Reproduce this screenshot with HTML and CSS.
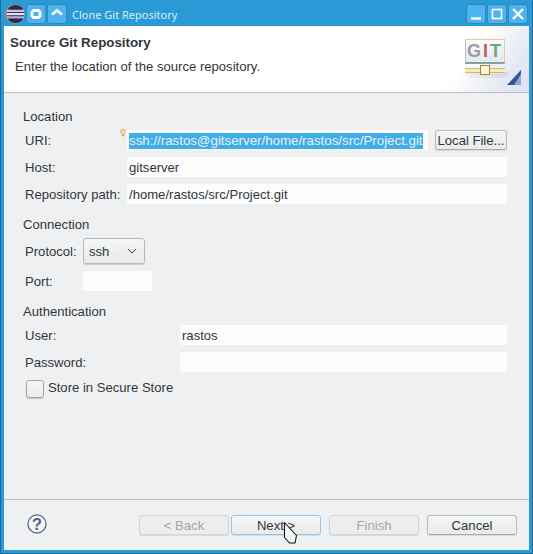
FILE: index.html
```html
<!DOCTYPE html>
<html lang="en">
<head>
  <meta charset="UTF-8" />
  <title>Clone Git Repository</title>
  <link rel="stylesheet" href="styles.css">
</head>
<body>
  <div class="window">

    <div class="titlebar">
      <svg class="app-icon" viewBox="0 0 21 21">
        <circle cx="10.5" cy="10.5" r="10" fill="#e8952c"/>
        <circle cx="11" cy="10.5" r="9.5" fill="#2c2357"/>
        <rect x="2" y="6" width="18" height="2.4" fill="#c9c6da"/>
        <rect x="1.5" y="9.4" width="19" height="2.4" fill="#e4e2ee"/>
        <rect x="2" y="12.8" width="18" height="2.4" fill="#b3afcc"/>
      </svg>
      <div class="tb-btn">
        <svg viewBox="1 1 18 18"><path d="M7.5 6.500h5l1.500 1.500v4l-1.500 1.500h-5L6 12V8z" fill="none" stroke="#fff" stroke-width="2.800"/></svg>
      </div>
      <div class="tb-btn">
        <svg viewBox="1 1 18 18"><path d="M5 10.500 10 6.500l5 4" fill="none" stroke="#fff" stroke-width="2.800"/></svg>
      </div>
      <span class="tb-title">Clone Git Repository</span>
      <div class="tb-btn">
        <svg viewBox="1 1 18 18"><path d="M5 14.500h10" stroke="#fff" stroke-width="2.400"/></svg>
      </div>
      <div class="tb-btn">
        <svg viewBox="1 1 18 18"><rect x="5.500" y="5.500" width="9" height="9" fill="none" stroke="#fff" stroke-width="1.600"/></svg>
      </div>
      <div class="tb-btn">
        <svg viewBox="1 1 18 18"><path d="M5 5l10 10M15 5 5 15" stroke="#fff" stroke-width="2.400"/></svg>
      </div>
    </div>

    <div class="dialog">
      <div class="banner">
        <div class="banner-text">
          <h1 class="banner-title">Source Git Repository</h1>
          <p class="banner-desc">Enter the location of the source repository.</p>
        </div>
        <div class="git-logo">
          <div class="git-box"><span class="g">G</span><span class="i">I</span><span class="t">T</span></div>
          <div class="git-shadow"></div>
          <div class="git-rail"><span class="git-knob"></span></div>
          <svg class="git-arrow" viewBox="0 0 14 15"><path d="M14 0v15H0z" fill="#2f5596"/><path d="M14 4v11H7z" fill="#8fa9d4"/></svg>
        </div>
      </div>

      <div class="body">
        <section class="group group-location">
          <div class="group-title">Location</div>
          <div class="row">
            <label class="lbl">URI:</label>
            <div class="field field-uri"><span class="sel">ssh://rastos@gitserver/home/rastos/src/Project.git</span></div>
            <div class="btn btn-local">Local File...</div>
            <svg class="bulb" viewBox="0 0 7 9"><path d="M3.500.5C1.800.5 1 1.600 1 2.800c0 1 .8 1.800 1.300 2.700L2.800 8h1.400l.5-2.500C5.200 4.600 6 3.800 6 2.800 6 1.600 5.200.5 3.500.5z" fill="#ffe9a8" stroke="#d9892a"/></svg>
          </div>
          <div class="row">
            <label class="lbl">Host:</label>
            <div class="field field-wide">gitserver</div>
          </div>
          <div class="row">
            <label class="lbl">Repository path:</label>
            <div class="field field-wide">/home/rastos/src/Project.git</div>
          </div>
        </section>

        <section class="group group-connection">
          <div class="group-title">Connection</div>
          <div class="row row-protocol">
            <label class="lbl lbl-short">Protocol:</label>
            <div class="select">
              <span>ssh</span>
              <svg viewBox="0 0 12 7"><path d="M1 1l5 5 5-5" fill="none" stroke="#3b3f44" stroke-width="1.200"/></svg>
            </div>
          </div>
          <div class="row">
            <label class="lbl lbl-short">Port:</label>
            <div class="field field-port"></div>
          </div>
        </section>

        <section class="group group-auth">
          <div class="group-title">Authentication</div>
          <div class="row">
            <label class="lbl lbl-auth">User:</label>
            <div class="field field-wide">rastos</div>
          </div>
          <div class="row">
            <label class="lbl lbl-auth">Password:</label>
            <div class="field field-wide"></div>
          </div>
          <div class="check-row">
            <span class="checkbox"></span>
            <span class="check-text">Store in Secure Store</span>
          </div>
        </section>
      </div>

      <div class="footer">
        <svg class="help" viewBox="0 0 21 21">
          <circle cx="10.500" cy="10.500" r="9.500" fill="#f3f4f7" stroke="#4f6288" stroke-width="1.300"/>
          <text x="10.500" y="16.500" text-anchor="middle" class="help-mark">?</text>
        </svg>
        <div class="footer-btns">
          <div class="btn btn-off">&lt; Back</div>
          <div class="btn btn-focus">Next &gt;</div>
          <div class="btn btn-off">Finish</div>
          <div class="btn">Cancel</div>
        </div>
      </div>
    </div>

    <svg class="cursor" viewBox="0 0 15 24">
      <path d="M1.500 1.500 13.500 14.500 12 22H6.500L1.500 16.500z" fill="#f6f6f6" stroke="#111" stroke-width="1.100" stroke-linejoin="round"/>
    </svg>
  </div>
</body>
</html>
```
FILE: styles.css
```css
/* Window chrome colours */
:root {
  --wm-blue: #2a9ad6;
  --wm-dark: #1c6a94;
  --btn-blue: #4db4ee;
  --panel: #eff0f1;
  --text: #31363b;
  --rule: #bcbebf;
}

html, body {
  margin: 0;
  padding: 0;
  background: var(--wm-dark);
}

.window {
  position: relative;
  width: 533px;
  height: 554px;
  box-sizing: border-box;
  display: flex;
  flex-direction: column;
  background: var(--wm-blue);
  border: 1px solid var(--wm-dark);
  border-top-color: var(--wm-blue);
  font-family: "Liberation Sans", Arial, sans-serif;
  font-size: 13.1px;
  color: var(--text);
  overflow: hidden;
}

/* Title bar */
.titlebar {
  height: 25px;
  flex: none;
  box-sizing: border-box;
  display: flex;
  align-items: flex-start;
  padding: 3px 4px 0 4px;
  gap: 1px;
}

.app-icon {
  width: 20px;
  height: 20px;
  flex: none;
}

.tb-btn {
  width: 20px;
  height: 20px;
  box-sizing: border-box;
  flex: none;
  background: var(--btn-blue);
  border: 1px solid #2d88bb;
  border-radius: 3px;
}

.tb-btn svg {
  display: block;
  width: 18px;
  height: 18px;
}

.tb-title {
  flex: 1;
  margin-left: 4px;
  font-family: "Noto Sans", sans-serif;
  font-size: 11px;
  line-height: 22px;
  color: #d6edf9;
}

/* Dialog */
.dialog {
  flex: 1;
  margin: 0 3px 3px 3px;
  display: flex;
  flex-direction: column;
  background: var(--panel);
  min-height: 0;
}

.banner {
  height: 67px;
  flex: none;
  display: flex;
  justify-content: space-between;
  box-sizing: border-box;
  border-bottom: 1px solid var(--rule);
  background: linear-gradient(125deg, #fff 85%, #e4e7f3 95%, #dde1f1 100%);
}

.banner-title {
  margin: 9px 0 0 6px;
  font-size: 13.33px;
  line-height: 15px;
  font-weight: bold;
}

.banner-desc {
  margin: 9px 0 0 11px;
  font-size: 13.1px;
  line-height: 15px;
}

.git-logo {
  position: relative;
  width: 64px;
}

.git-box {
  position: absolute;
  left: 0;
  top: 13px;
  width: 40px;
  height: 25px;
  box-sizing: border-box;
  border: 1px solid #b9c4bd;
  border-top-color: #e4c89c;
  border-right-color: #dcc9a6;
  border-bottom: 2px solid #8aa09c;
  background: linear-gradient(#fbfbfd, #e4e8f2);
  text-align: center;
  font-size: 18px;
  font-weight: bold;
  line-height: 23px;
  letter-spacing: 2px;
}

.g { color: #9a9c9f; }
.i { color: #c05a62; }
.t { color: #6ba97a; }

.git-shadow {
  position: absolute;
  left: 0;
  top: 46px;
  width: 44px;
  height: 6px;
  background: linear-gradient(90deg, #f2eff6, #d9d6e6);
  border-radius: 0 0 6px 6px;
}

.git-rail {
  position: absolute;
  left: 0;
  top: 42px;
  width: 40px;
  height: 3px;
  border-top: 1px solid #c9bd6c;
  border-bottom: 1px solid #c9bd6c;
  background: #f3eeb8;
}

.git-knob {
  position: absolute;
  left: 15px;
  top: -4px;
  width: 8px;
  height: 8px;
  border: 1px solid #94893c;
  background: #fdf6d4;
}

.git-arrow {
  position: absolute;
  left: 42px;
  top: 44px;
  width: 14px;
  height: 15px;
}

.body {
  flex: 1;
  padding: 16px 22px 0 19px;
}

.group-title {
  line-height: 15px;
}

.group + .group { margin-top: 13px; }

.row {
  position: relative;
  display: flex;
  align-items: center;
  height: 20px;
  margin-bottom: 7px;
}

.group-title + .row { margin-top: 6px; }

.row-protocol { height: 26px; }

.lbl {
  width: 104px;
  box-sizing: border-box;
  flex: none;
  padding-left: 2px;
}

.lbl-short { width: 60px; }
.lbl-auth { width: 157px; }

.field {
  height: 20px;
  box-sizing: border-box;
  background: #fcfcfc;
  padding-left: 2px;
  line-height: 22px;
  white-space: nowrap;
}

.field-wide { flex: 1; }

.field-uri {
  width: 301px;
  flex: none;
  line-height: 20px;
}

.sel {
  display: inline-block;
  vertical-align: middle;
  font-size: 13.3px;
  line-height: 16px;
  background: #3daee9;
  color: #eff0f1;
}

.field-port {
  width: 69px;
}

.bulb {
  position: absolute;
  left: 97px;
  top: -1px;
  width: 6px;
  height: 8px;
}

.btn {
  box-sizing: border-box;
  display: flex;
  align-items: center;
  justify-content: center;
  height: 20px;
  width: 90px;
  border: 1px solid #b9babb;
  border-bottom-color: #a9aaab;
  border-radius: 3px;
  background: linear-gradient(#f4f5f5, #e9eaeb);
  box-shadow: 0 1px 1px rgba(0, 0, 0, 0.1);
}

.btn-local {
  width: 72px;
  margin-left: 7px;
}

.select {
  width: 62px;
  height: 26px;
  box-sizing: border-box;
  display: flex;
  align-items: center;
  justify-content: space-between;
  padding: 0 7px 0 5px;
  border: 1px solid #b9babb;
  border-radius: 3px;
  background: linear-gradient(#f4f5f5, #e9eaeb);
  box-shadow: 0 1px 1px rgba(0, 0, 0, 0.15);
}

.select svg {
  width: 10px;
  height: 6px;
}

.check-row {
  display: flex;
  align-items: center;
  gap: 4px;
  margin-left: 3px;
  height: 20px;
}

.check-text {
  line-height: 18px;
  margin-bottom: 2px;
}

.checkbox {
  width: 18px;
  height: 18px;
  box-sizing: border-box;
  border: 1px solid #a4a6a8;
  border-radius: 3px;
  background: linear-gradient(#f4f5f5, #e9eaeb);
  box-shadow: 0 1px 1px rgba(0, 0, 0, 0.2);
}

/* Bottom button bar */
.footer {
  height: 51px;
  flex: none;
  box-sizing: border-box;
  display: flex;
  align-items: flex-start;
  justify-content: space-between;
  border-top: 1px solid var(--rule);
  padding: 14px 12px 0 23px;
}

.help {
  width: 20px;
  height: 20px;
}

.help-mark {
  font-family: "Liberation Sans", Arial, sans-serif;
  font-size: 17px;
  font-weight: bold;
  fill: #4f6288;
}

.footer-btns {
  display: flex;
  gap: 8px;
  margin-top: 1px;
}

.footer-btns .btn:first-child { margin-right: -6px; }

.btn-off {
  color: #a4a6a8;
  border-color: #d3d4d5;
  background: #eceded;
}

.btn-focus {
  border-color: #8fcbe9;
}

.cursor {
  position: absolute;
  left: 282px;
  top: 520px;
  width: 15px;
  height: 24px;
}
```
